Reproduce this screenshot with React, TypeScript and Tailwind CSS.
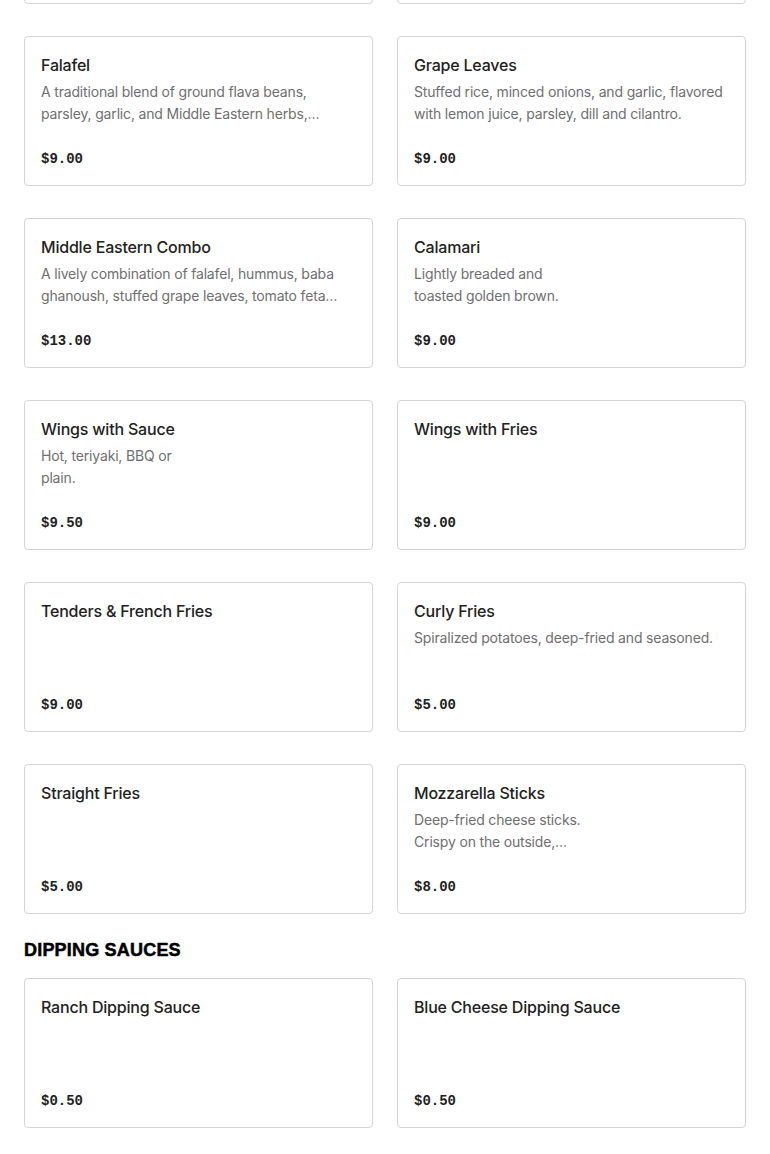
import React from "react";

type Item = { name: string; desc?: string; price: string };

const rows: Item[][] = [
  [
    {
      name: "Falafel",
      desc: "A traditional blend of ground flava beans, parsley, garlic, and Middle Eastern herbs, shaped into balls and fried.",
      price: "$9.00",
    },
    {
      name: "Grape Leaves",
      desc: "Stuffed rice, minced onions, and garlic, flavored with lemon juice, parsley, dill and cilantro.",
      price: "$9.00",
    },
  ],
  [
    {
      name: "Middle Eastern Combo",
      desc: "A lively combination of falafel, hummus, baba ghanoush, stuffed grape leaves, tomato feta salad and pita bread.",
      price: "$13.00",
    },
    { name: "Calamari", desc: "Lightly breaded and\ntoasted golden brown.", price: "$9.00" },
  ],
  [
    { name: "Wings with Sauce", desc: "Hot, teriyaki, BBQ or\nplain.", price: "$9.50" },
    { name: "Wings with Fries", price: "$9.00" },
  ],
  [
    { name: "Tenders & French Fries", price: "$9.00" },
    { name: "Curly Fries", desc: "Spiralized potatoes, deep-fried and seasoned.", price: "$5.00" },
  ],
  [
    { name: "Straight Fries", price: "$5.00" },
    {
      name: "Mozzarella Sticks",
      desc: "Deep-fried cheese sticks.\nCrispy on the outside,\ngooey on the inside.",
      price: "$8.00",
    },
  ],
];

const sauces: Item[] = [
  { name: "Ranch Dipping Sauce", price: "$0.50" },
  { name: "Blue Cheese Dipping Sauce", price: "$0.50" },
];

function Card({ item }: { item: Item }) {
  return (
    <div className="flex h-[150px] flex-col rounded-[4px] border border-[#d4d4d4] bg-white px-4 pt-4 pb-4">
      <div className="text-[16px] leading-6 font-medium tracking-[-0.2px] text-[#222222]">{item.name}</div>
      {item.desc ? (
        <div className="mt-1 line-clamp-2 whitespace-pre-line text-[14px] leading-[22px] tracking-[-0.17px] text-[#6f6f6f]">
          {item.desc}
        </div>
      ) : null}
      <div
        className="mt-auto text-[14px] leading-5 font-bold text-[#222222]"
        style={{ fontFamily: '"Liberation Mono", monospace' }}
      >
        {item.price}
      </div>
    </div>
  );
}

export default function App() {
  return (
    <div
      className="min-h-[1154px] overflow-hidden bg-white px-6"
      style={{ fontFamily: 'Inter, "Liberation Sans", sans-serif' }}
    >
      <div className="-mt-[146px] grid grid-cols-2 gap-x-6">
        <div className="h-[150px] rounded-[4px] border border-[#d4d4d4] bg-white" />
        <div className="h-[150px] rounded-[4px] border border-[#d4d4d4] bg-white" />
      </div>
      <div className="mt-8 grid grid-cols-2 gap-x-6 gap-y-8">
        {rows.flat().map((it, i) => (
          <Card key={i} item={it} />
        ))}
      </div>
      <h2
        className="mt-6 mb-4 text-[18px] leading-6 font-bold tracking-[0.2px] text-black uppercase [-webkit-text-stroke:0.5px_black]"
        style={{ fontFamily: '"Liberation Sans", Arial, sans-serif' }}
      >
        Dipping Sauces
      </h2>
      <div className="grid grid-cols-2 gap-x-6 gap-y-8 pb-6">
        {sauces.map((it, i) => (
          <Card key={i} item={it} />
        ))}
      </div>
    </div>
  );
}
